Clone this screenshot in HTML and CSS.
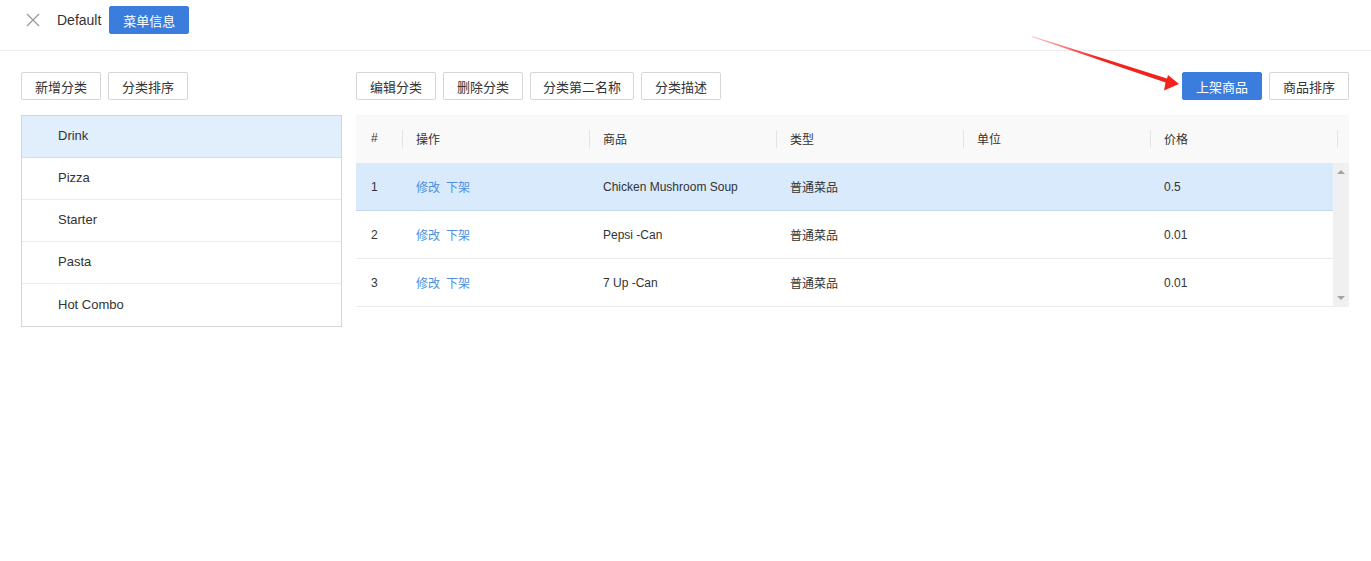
FILE: index.html
```html
<!DOCTYPE html>
<html lang="zh-CN">
<head>
    <meta charset="UTF-8">
    <meta name="viewport" content="width=device-width, initial-scale=1.0">
    <title>菜单信息</title>
    <link rel="stylesheet" href="styles.css">
</head>
<body>
    <div class="topbar">
        <span class="close">
            <svg width="14" height="14" viewBox="0 0 14 14"><path d="M1 1L13 13M13 1L1 13" stroke="#9a9a9a" stroke-width="1.3" fill="none"/></svg>
        </span>
        <span class="menu-name">Default</span>
        <button class="btn btn-primary">菜单信息</button>
    </div>

    <div class="main">
        <div class="side">
            <div class="toolbar">
                <button class="btn">新增分类</button>
                <button class="btn">分类排序</button>
            </div>
            <ul class="cat-list">
                <li class="active">Drink</li>
                <li>Pizza</li>
                <li>Starter</li>
                <li>Pasta</li>
                <li>Hot Combo</li>
            </ul>
        </div>

        <div class="content">
            <div class="toolbar">
                <button class="btn">编辑分类</button>
                <button class="btn">删除分类</button>
                <button class="btn">分类第二名称</button>
                <button class="btn">分类描述</button>
                <span class="spacer"></span>
                <button class="btn btn-primary">上架商品</button>
                <button class="btn">商品排序</button>
            </div>

            <div class="grid">
                <div class="grid-head">
                    <div class="cell c-no">#</div>
                    <div class="cell sep">操作</div>
                    <div class="cell sep">商品</div>
                    <div class="cell sep">类型</div>
                    <div class="cell sep">单位</div>
                    <div class="cell sep">价格</div>
                    <div class="cell sep gutter"></div>
                </div>
                <div class="grid-body">
                    <div class="rows">
                        <div class="row selected">
                            <div class="cell c-no">1</div>
                            <div class="cell"><a class="link">修改</a><a class="link">下架</a></div>
                            <div class="cell">Chicken Mushroom Soup</div>
                            <div class="cell">普通菜品</div>
                            <div class="cell"></div>
                            <div class="cell c-last">0.5</div>
                        </div>
                        <div class="row">
                            <div class="cell c-no">2</div>
                            <div class="cell"><a class="link">修改</a><a class="link">下架</a></div>
                            <div class="cell">Pepsi -Can</div>
                            <div class="cell">普通菜品</div>
                            <div class="cell"></div>
                            <div class="cell c-last">0.01</div>
                        </div>
                        <div class="row">
                            <div class="cell c-no">3</div>
                            <div class="cell"><a class="link">修改</a><a class="link">下架</a></div>
                            <div class="cell">7 Up -Can</div>
                            <div class="cell">普通菜品</div>
                            <div class="cell"></div>
                            <div class="cell c-last">0.01</div>
                        </div>
                    </div>
                    <div class="scrollbar">
                        <span class="arrow-up"></span>
                        <span class="arrow-down"></span>
                    </div>
                </div>
            </div>
        </div>
    </div>

    <svg class="pointer" width="160" height="65" viewBox="1030 30 160 65">
        <defs>
            <linearGradient id="fade" x1="1032" y1="0" x2="1100" y2="0" gradientUnits="userSpaceOnUse">
                <stop offset="0" stop-color="#f2231d" stop-opacity="0.25"/>
                <stop offset="1" stop-color="#f2231d"/>
            </linearGradient>
        </defs>
        <polygon points="1032,36 1167,78.5 1168,75 1179,84 1164,90.5 1165.5,82.5 1032,37" fill="url(#fade)"/>
    </svg>
</body>
</html>
```

FILE: styles.css
```css
body{
    margin: 0;
    font-family: "Liberation Sans", Arial, "Noto Sans CJK SC", sans-serif;
    color: #333;
    background: #fff;
    position: relative;
}

.topbar{
    display: flex;
    align-items: center;
    height: 28px;
    padding: 6px 0 16px 26px;
    border-bottom: 1px solid #ececec;
}
.close{
    display: flex;
    width: 14px;
    height: 14px;
    margin-right: 17px;
}
.menu-name{
    font-size: 14px;
    margin-right: 8px;
}

.btn{
    min-width: 80px;
    height: 28px;
    padding: 0 12px;
    font-family: inherit;
    font-size: 13px;
    color: #333;
    background: #fff;
    border: 1px solid #d6d6d6;
    border-radius: 2px;
    cursor: pointer;
}
.btn-primary{
    background: #3b7ddd;
    border-color: #3b7ddd;
    color: #fff;
}

.main{
    display: flex;
    gap: 14px;
    padding: 21px 22px 0 21px;
}
.side{
    width: 321px;
    flex: none;
}
.content{
    flex: 1;
    min-width: 0;
}
.toolbar{
    display: flex;
    gap: 7px;
    margin-bottom: 15px;
}
.spacer{
    flex: 1;
}

.cat-list{
    list-style: none;
    margin: 0;
    padding: 0;
    border: 1px solid #d5d5d5;
}
.cat-list li{
    height: 41px;
    line-height: 40px;
    padding-left: 36px;
    font-size: 13px;
    border-bottom: 1px solid #ebebeb;
}
.cat-list li:last-child{
    border-bottom: none;
    height: 42px;
    line-height: 42px;
}
.cat-list li.active{
    background: #e1eefb;
    border-bottom-color: #cfdff0;
}

.grid{
    font-size: 12px;
}
.grid-head{
    display: flex;
    height: 48px;
    background: #f9f9f9;
}
.grid-head .cell{
    padding-bottom: 2px;
}
.cell{
    position: relative;
    display: flex;
    align-items: center;
    width: 187px;
    flex: none;
    padding-left: 14px;
    box-sizing: border-box;
}
.cell.c-no{
    width: 46px;
    padding-left: 15px;
}
.cell.sep::before{
    content: '';
    position: absolute;
    left: 0;
    top: 15px;
    height: 18px;
    border-left: 1px solid #e4e4e4;
}
.cell.gutter{
    width: 12px;
}
.grid-body{
    display: flex;
    height: 144px;
}
.rows{
    flex: 1;
}
.row{
    display: flex;
    height: 47px;
    border-bottom: 1px solid #e9e9e9;
}
.row.selected{
    background: #d9eafc;
    border-bottom-color: #c4daf2;
}
.cell.c-last{
    width: 183px;
}
.link{
    color: #4b8fe0;
    margin-right: 6px;
    cursor: pointer;
}

.scrollbar{
    position: relative;
    width: 17px;
    background: #f0f0f0;
}
.arrow-up,
.arrow-down{
    position: absolute;
    left: 4px;
    width: 0;
    height: 0;
    border-left: 4px solid transparent;
    border-right: 4px solid transparent;
}
.arrow-up{
    top: 7px;
    border-bottom: 4px solid #a3a3a3;
}
.arrow-down{
    bottom: 7px;
    border-top: 4px solid #a3a3a3;
}

.pointer{
    position: absolute;
    left: 1030px;
    top: 30px;
}
```
